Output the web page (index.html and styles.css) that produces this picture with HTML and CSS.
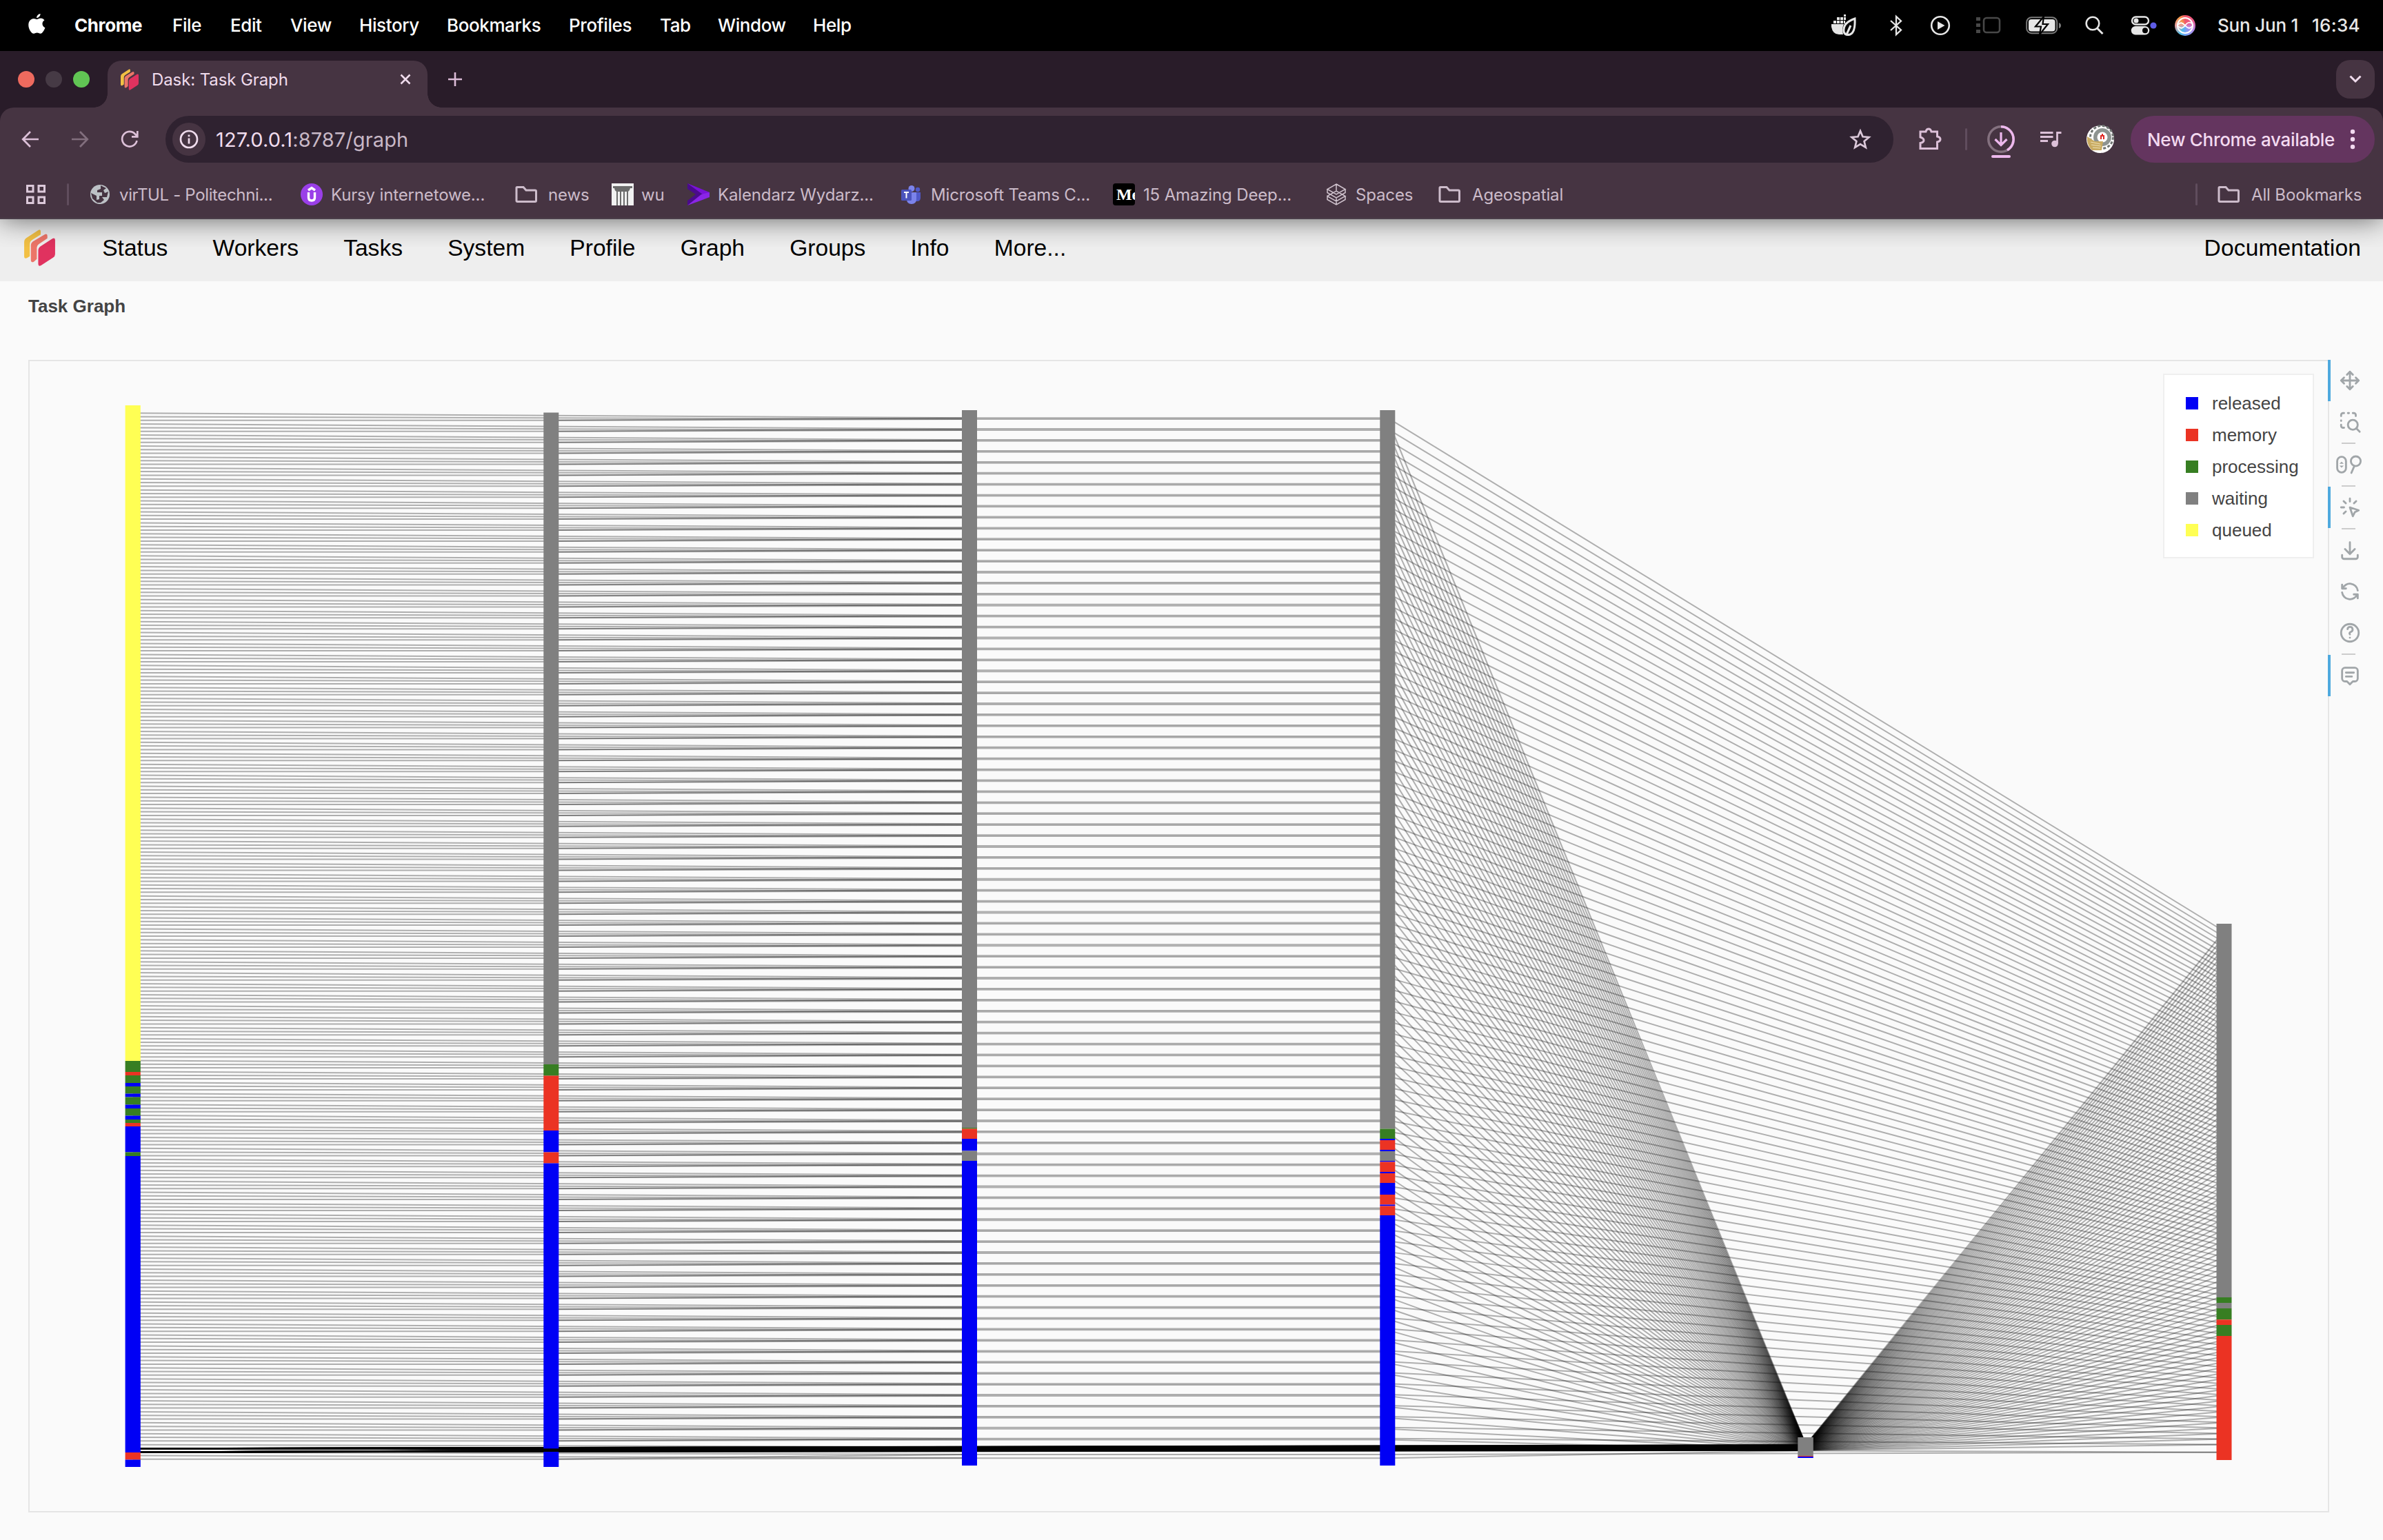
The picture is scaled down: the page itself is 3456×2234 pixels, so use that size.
FILE: index.html
```html
<!DOCTYPE html>
<html lang="en">
<head>
<meta charset="utf-8">
<title>Dask: Task Graph</title>
<link rel="stylesheet" href="styles.css">
</head>
<body>
<svg class="defs" width="0" height="0">
  <symbol id="dask" viewBox="0 0 44 52">
    <path fill="#f2c044" d="M0 18Q0 14 3 12L20 1Q23.500 -1 23.500 3V7L11 15Q8 17 8 21V38L4 40.500Q0 42 0 38Z"/>
    <path fill="#ec7568" d="M9.500 23Q9.500 19 12.500 17L29 7Q33 5 33 9V12.500L21 20.500Q18 22.500 18 26.500V42L14 45.500Q9.500 48 9.500 43Z"/>
    <path fill="#e0325f" d="M20 30Q20 26 23 24L40 13Q44 11 44 15V35Q44 38 41 40L24 51Q20 53 20 49Z"/>
  </symbol>
  <symbol id="folder" viewBox="0 0 32 32">
    <path d="M2 6.500Q2 5.500 3 5.500H12L16 10H29Q30.500 10 30.500 11.500V25Q30.500 26.500 29 26.500H3.500Q2 26.500 2 25Z" fill="none" stroke="#cdbccb" stroke-width="3"/>
  </symbol>
</svg>

<header class="menubar">
  <svg class="apple" viewBox="0 0 26 32"><path fill="#fff" d="M18.200 0c.2 3-2.600 6.300-5.600 6.200C12.300 3.300 15.300.2 18.200 0zM13.200 8.200c1.300 0 3-1.600 5.800-1.500 2.200.1 4.200 1.200 5.300 2.900-4.600 2.900-3.800 9.300 1 11.200-1 3-4 8.800-7 8.900-2 .1-2.700-1.200-5-1.200s-3.200 1.200-5 1.200C4.700 29.600.4 22.700.4 16.700.4 10.600 4.300 7.200 8 7.100c2.200 0 4 1.100 5.200 1.100z"/></svg>
  <nav class="menus">
    <span class="m1 app">Chrome</span><span class="m2">File</span><span class="m3">Edit</span><span class="m4">View</span><span class="m5">History</span><span class="m6">Bookmarks</span><span class="m7">Profiles</span><span class="m8">Tab</span><span class="m9">Window</span><span class="m10">Help</span>
  </nav>
  <div class="status">
    <svg class="s-docker" viewBox="0 0 38 32"><g fill="#e6e6e6"><path d="M0 14H18Q15 20 17 29H11Q2 29 0 18Z"/><path d="M3 9h4v4H3zM8 9h4v4H8zM13 9h4v4h-4zM8 4h4v4H8zM13 4h4v4h-4zM18 4h3v4h-3zM18 0h3v3h-3zM18 9h2v4h-2z"/></g><path d="M34 6C22 10 17 17 18 25Q20 31 27 29Q35 26 34 6ZM22 29L28 16" fill="none" stroke="#e6e6e6" stroke-width="3"/></svg>
    <svg class="s-bt" viewBox="0 0 20 30"><path d="M2 8L17 21.500L10 28V2L17 8.500L2 22" fill="none" stroke="#e6e6e6" stroke-width="2.300"/></svg>
    <svg class="s-play" viewBox="0 0 30 30"><circle cx="15" cy="15" r="12.800" fill="none" stroke="#e6e6e6" stroke-width="2.600"/><path d="M11 9L21.500 15L11 21Z" fill="#e6e6e6"/></svg>
    <svg class="s-stage" viewBox="0 0 36 26"><rect x="11" y="2" width="23" height="21" rx="4" fill="none" stroke="#484848" stroke-width="2.600"/><path d="M0 1h6v5H0zM0 10h6v5H0zM0 19h6v5H0z" fill="#484848"/></svg>
    <svg class="s-bat" viewBox="0 0 52 26"><rect x="1.200" y="1.200" width="44" height="23" rx="7" fill="none" stroke="#7b7b7b" stroke-width="2"/><rect x="4" y="4" width="38.500" height="17.500" rx="4" fill="#e6e6e6"/><path d="M48 9Q51 10 51 13T48 17Z" fill="#7b7b7b"/><path d="M26 0L14 14.500H22L20 26L32 11H24.500Z" fill="#e6e6e6" stroke="#000" stroke-width="2.200"/></svg>
    <svg class="s-find" viewBox="0 0 28 28"><circle cx="11" cy="11" r="9.300" fill="none" stroke="#e6e6e6" stroke-width="2.600"/><path d="M17.500 18L25.500 26" stroke="#e6e6e6" stroke-width="3"/></svg>
    <svg class="s-ctl" viewBox="0 0 38 28"><rect x="2" y="1.500" width="24" height="11" rx="5.500" fill="none" stroke="#e6e6e6" stroke-width="2.400"/><circle cx="8" cy="7" r="3.500" fill="#e6e6e6"/><rect x=".8" y="15" width="26.400" height="12.500" rx="6.200" fill="#e6e6e6"/><circle cx="21" cy="21.200" r="4" fill="#000"/><circle cx="33" cy="14" r="4.600" fill="#5e5ce6"/></svg>
    <span class="siri"><svg viewBox="0 0 30 30"><circle cx="15" cy="15" r="11" fill="none" stroke="#fff" stroke-width="2"/><path d="M5 14Q9 8 15 15T25 16M5 16Q10 22 15 15T25 12" fill="none" stroke="#fff" stroke-width="1.800"/></svg></span>
    <span class="date">Sun Jun 1</span><span class="clock">16:34</span>
  </div>
</header>

<section class="tabstrip">
  <div class="lights"><i class="red"></i><i class="dim"></i><i class="green"></i></div>
  <div class="tab">
    <svg class="favicon"><use href="#dask"/></svg>
    <span class="tab-title">Dask: Task Graph</span>
    <svg class="tab-close" viewBox="0 0 16 16"><path d="M1.500 1.500L14.500 14.500M14.500 1.500L1.500 14.500" stroke="#f0dced" stroke-width="2.600"/></svg>
  </div>
  <svg class="plus" viewBox="0 0 20 20"><path d="M10 0V20M0 10H20" stroke="#dcbcd8" stroke-width="2.600"/></svg>
  <div class="tabsearch"><svg viewBox="0 0 18 12"><path d="M1.500 1.500L9 9L16.500 1.500" fill="none" stroke="#f0dced" stroke-width="3"/></svg></div>
</section>

<section class="chrome">
  <div class="toolbar">
    <svg class="t-back" viewBox="0 0 26 26"><path d="M25 13H3M13 2L2.200 13L13 24" fill="none" stroke="#dcc0d8" stroke-width="2.700"/></svg>
    <svg class="t-fwd" viewBox="0 0 26 26"><path d="M1 13H23M13 2L23.800 13L13 24" fill="none" stroke="#826f7e" stroke-width="2.700"/></svg>
    <svg class="t-load" viewBox="0 0 26 26"><path d="M23.500 15A10.800 10.800 0 1 1 21 5.500L24 8.500M24.300 1V9.300H16" fill="none" stroke="#dcc0d8" stroke-width="2.700"/></svg>
    <div class="omnibox">
      <span class="site"><svg viewBox="0 0 28 28"><circle cx="14" cy="14" r="12" fill="none" stroke="#f0dced" stroke-width="2.700"/><path d="M14 12.500V20.500M14 7.500V10.200" stroke="#f0dced" stroke-width="2.700"/></svg></span>
      <span class="url"><b>127.0.0.1</b>:8787/graph</span>
      <svg class="star" viewBox="0 0 32 32"><path d="M16 4L19.500 12.300L28.500 13L21.600 19L23.800 27.800L16 23L8.200 27.800L10.400 19L3.500 13L12.500 12.300Z" fill="none" stroke="#dcc9da" stroke-width="2.700"/></svg>
    </div>
    <svg class="t-ext" viewBox="0 0 34 34"><path d="M3 7H11Q12 3 15 3T19 7H27.500V14Q32 15 32 18T27.500 22V31.500H3V23.500Q8 22.500 8 19.500T3 15Z" fill="none" stroke="#dcc0d8" stroke-width="3"/></svg>
    <i class="bar"></i>
    <svg class="t-down" viewBox="0 0 40 48"><circle cx="20" cy="20" r="18.200" fill="none" stroke="#84717f" stroke-width="3.500"/><path d="M20 1.800A18.200 18.200 0 0 1 29 35.800" fill="none" stroke="#edb8ed" stroke-width="3.500"/><path d="M20 10V27M11.500 20L20 28.500L28.500 20" fill="none" stroke="#edb8ed" stroke-width="3.200"/><rect x="6" y="43" width="28" height="4" rx="2" fill="#edb8ed"/></svg>
    <svg class="t-list" viewBox="0 0 32 26"><path d="M0 3.500H18.500M0 9.500H18.500M0 15.500H11M30.500 3.500H24.500V19" fill="none" stroke="#dcc0d8" stroke-width="2.800"/><circle cx="21" cy="19.500" r="4.800" fill="#dcc0d8"/></svg>
    <svg class="avatar" viewBox="0 0 40 40"><circle cx="20" cy="20" r="20" fill="#fff"/><circle cx="22" cy="17" r="16.500" fill="none" stroke="#6f7572" stroke-width="3" stroke-dasharray="4 2.500"/><circle cx="23" cy="17" r="13" fill="#8e9491"/><circle cx="23" cy="17" r="7.500" fill="#fff"/><path d="M20 20V14H22V12H24V14H26V20H24V16H22V20Z" fill="#e02a26"/><path d="M1 16L12 23H24L22 36H8Q2 30 1 22Z" fill="#c9ab62"/><path d="M6 24L20 27M7 28L21 30M9 32L20 33" stroke="#eee0b5" stroke-width="1"/></svg>
    <div class="update"><span>New Chrome available</span><svg viewBox="0 0 8 30"><g fill="#f3daf0"><circle cx="4" cy="4" r="3.200"/><circle cx="4" cy="15" r="3.200"/><circle cx="4" cy="26" r="3.200"/></g></svg></div>
  </div>
  <div class="bookmarks">
    <svg class="apps" viewBox="0 0 28 28"><path d="M1.500 1.500h8.500v8.500H1.500zM18 1.500h8.500v8.500H18zM1.500 18h8.500v8.500H1.500zM18 18h8.500v8.500H18z" fill="none" stroke="#dcc9da" stroke-width="3"/></svg>
    <i class="bar"></i>
    <div class="bm b1"><svg viewBox="0 0 32 32"><circle cx="16" cy="16" r="14" fill="#bdc1c6"/><path d="M17 3V8L12 10V13H19V18H15V23L11 24V18L3 14L5 22L12 28L17 28L22 24L19 20H26L28 12L23 14L21 10L25 7Z" fill="#463442"/></svg><span>virTUL - Politechni...</span></div>
    <div class="bm b2"><svg viewBox="0 0 32 32"><circle cx="16" cy="16" r="16" fill="#9a3fe8"/><path d="M11.500 13V20.500Q11.500 25 16 25T20.500 20.500V13M11 10L16 6.500L21 10" fill="none" stroke="#fff" stroke-width="3.400"/></svg><span>Kursy internetowe...</span></div>
    <div class="bm b3 fold"><svg><use href="#folder"/></svg><span>news</span></div>
    <div class="bm b4"><svg viewBox="0 0 32 32"><path fill="#f1f1f1" d="M0 0H32V32H0Z"/><path fill="#6c6c6c" d="M2 4H30V7H27Q26 11 24 12V32H22V12H19V32H17V12H14V32H12V12H9V32H7V12Q4 10 4 7H2Z"/></svg><span>wu</span></div>
    <div class="bm b5"><svg viewBox="0 0 32 32"><path fill="#7a12d8" d="M0 0L32 13V20L18 16Z"/><path fill="#4a0b8c" d="M0 0L22 16L0 32V25L12 16L0 8Z"/><path fill="#8a25e6" d="M32 13V20L0 32L20 16Z"/></svg><span>Kalendarz Wydarz...</span></div>
    <div class="bm b6"><svg viewBox="0 0 32 32"><circle cx="17" cy="7.500" r="4.500" fill="#7b83eb"/><circle cx="26" cy="9" r="3.200" fill="#5059c9"/><path d="M21 13H30V21Q30 26 25 26H21Z" fill="#5059c9"/><path d="M10 13H24V23Q24 30 17 30T10 23Z" fill="#7b83eb"/><rect x="2" y="9" width="15" height="16" rx="1.500" fill="#4b53bc"/><path d="M6 13H13M9.500 13V21.500" stroke="#fff" stroke-width="2"/></svg><span>Microsoft Teams C...</span></div>
    <div class="bm b7"><span class="me">Me</span><span>15 Amazing Deep...</span></div>
    <div class="bm b8"><svg viewBox="0 0 32 32"><path d="M16 1L29 8.500L16 16L3 8.500ZM3 8.500V13.500L16 21L29 13.500V8.500M3 18.500L16 11L29 18.500L16 26L3 18.500V23.500L16 31L29 23.500V18.500M16 1V11M16 21V31" fill="none" stroke="#cfc2cd" stroke-width="1.500"/></svg><span>Spaces</span></div>
    <div class="bm b9 fold"><svg><use href="#folder"/></svg><span>Ageospatial</span></div>
    <i class="bar right"></i>
    <div class="bm b10 fold"><svg><use href="#folder"/></svg><span>All Bookmarks</span></div>
  </div>
</section>

<nav class="dasknav">
  <svg class="logo"><use href="#dask"/></svg>
  <a>Status</a><a>Workers</a><a>Tasks</a><a>System</a><a>Profile</a><a>Graph</a><a>Groups</a><a>Info</a><a>More...</a>
  <a class="docs">Documentation</a>
</nav>

<main class="page">
  <h1>Task Graph</h1>
  <div class="figure">
    <div class="plot">
      <canvas id="graph" width="3334" height="1668"></canvas>
      <ul class="legend">
        <li><i class="released"></i>released</li>
        <li><i class="memory"></i>memory</li>
        <li><i class="processing"></i>processing</li>
        <li><i class="waiting"></i>waiting</li>
        <li><i class="queued"></i>queued</li>
      </ul>
    </div>
    <div class="tools">
      <div class="tool on"><svg viewBox="0 0 24 24"><path d="M3 12H21M12 3V21M18 9L21 12L18 15M6 9L3 12L6 15M9 6L12 3L15 6M9 18L12 21L15 18"/></svg></div>
      <div class="tool"><svg viewBox="0 0 24 24"><circle cx="15" cy="15" r="5"/><path d="M22 22L18.500 18.500M6 18H5A2 2 0 0 1 3 16V15M3 11V10.500M3 6V5A2 2 0 0 1 5 3H6M10 3H11M15 3H16A2 2 0 0 1 18 5V6"/></svg></div>
      <hr>
      <div class="tool"><svg viewBox="0 0 24 24"><rect x="-1" y="4" width="9" height="16" rx="4.500"/><circle cx="18" cy="8.500" r="5"/><path d="M16.500 13.500L13.500 20.500"/><path class="fill" d="M1.300 11.200L3.500 9L5.700 11.200ZM1.300 13L3.500 15.200L5.700 13Z"/></svg></div>
      <hr>
      <div class="tool on"><svg viewBox="0 0 24 24"><path d="M3 12H6M12 3V6M5.600 5.600L7.800 7.800M18.400 5.600L16.200 7.800M7.800 16.200L5.600 18.400M12 12L21 15L17 17L15 21Z"/></svg></div>
      <hr>
      <div class="tool"><svg viewBox="0 0 24 24"><path d="M4 17V19A2 2 0 0 0 6 21H18A2 2 0 0 0 20 19V17M7 11L12 16L17 11M12 4V16"/></svg></div>
      <div class="tool"><svg viewBox="0 0 24 24"><path d="M20 11A8.100 8.100 0 0 0 4.500 9M4 5V9H8M4 13A8.100 8.100 0 0 0 19.500 15M20 19V15H16"/></svg></div>
      <div class="tool"><svg viewBox="0 0 24 24"><circle cx="12" cy="12" r="9"/><path d="M12 17V17.010M12 13.500A1.500 1.500 0 0 1 13 11A2.600 2.600 0 1 0 9.600 8.200"/></svg></div>
      <hr>
      <div class="tool on"><svg viewBox="0 0 24 24"><path d="M8 9H16M8 13H14M9 18H7A3 3 0 0 1 4 15V7A3 3 0 0 1 7 4H17A3 3 0 0 1 20 7V15A3 3 0 0 1 17 18H15L12 21Z"/></svg></div>
    </div>
  </div>
</main>
<script src="graph.js"></script>
</body>
</html>
```

FILE: styles.css
```css
* { box-sizing: border-box; }
body { margin: 0; background: #fafafa; font-family: Inter, "Noto Sans", sans-serif; width: 3456px; height: 2234px; overflow: hidden; }
.defs { display: block; height: 0; }
svg { display: block; flex: none; overflow: visible; }
i { display: block; flex: none; }
span { white-space: nowrap; }

/* system menu bar */
.menubar { height: 74px; background: #000; color: #fff; display: flex; align-items: center; padding: 0 33px 1px 40px; font-size: 26px; letter-spacing: -.4px; }
.apple { width: 27px; height: 31px; margin: -3px 41px 0 0; }
.menus { display: flex; font-weight: 500; }
.app { font-weight: 700; }
.m1 { width: 142px; } .m2 { width: 84px; } .m3 { width: 87px; } .m4 { width: 100px; } .m5 { width: 127px; }
.m6 { width: 177px; } .m7 { width: 132px; } .m8 { width: 84px; } .m9 { width: 138px; }
.status { margin-left: auto; display: flex; align-items: center; color: #e8e8e8; font-weight: 500; }
.s-docker { width: 38px; height: 32px; margin-right: 46px; }
.s-bt { width: 20px; height: 30px; margin-right: 39px; }
.s-play { width: 30px; height: 30px; margin-right: 37px; }
.s-stage { width: 36px; height: 26px; margin-right: 36px; }
.s-bat { width: 52px; height: 26px; margin-right: 34px; }
.s-find { width: 28px; height: 28px; margin-right: 38px; }
.s-ctl { width: 38px; height: 28px; margin-right: 26px; }
.siri { width: 30px; height: 30px; border-radius: 50%; margin-right: 32px; background: conic-gradient(#f0566a, #f05a86 15%, #b98bea 32%, #6fa6f7 50%, #4fc0e8 58%, #e9a0a0 75%, #f59a4a 90%, #f0566a); }
.date { width: 137px; letter-spacing: -.2px; }
.clock { width: 70px; letter-spacing: .3px; }

/* tab strip */
.tabstrip { height: 82px; background: #291c29; display: flex; align-items: center; padding: 0 12px 0 26px; }
.lights { display: flex; gap: 16px; width: 130px; }
.lights i { width: 24px; height: 24px; border-radius: 50%; }
.lights .red { background: #ed6a5e; }
.lights .dim { background: #463a45; }
.lights .green { background: #61c554; }
.tab { position: relative; align-self: flex-end; width: 464px; height: 68px; background: #463442; border-radius: 20px 20px 0 0; display: flex; align-items: center; padding: 0 24px 14px 19px; }
.tab::before, .tab::after { content: ""; position: absolute; bottom: 0; width: 20px; height: 20px; }
.tab::before { left: -20px; background: radial-gradient(circle at 0 0, transparent 19.500px, #463442 20px); }
.tab::after { right: -20px; background: radial-gradient(circle at 100% 0, transparent 19.500px, #463442 20px); }
.favicon { width: 26px; height: 31px; margin-right: 19px; }
.tab-title { color: #f0dced; font-size: 24px; letter-spacing: -.1px; }
.tab-close { width: 16px; height: 16px; margin-left: auto; }
.plus { width: 20px; height: 20px; margin-left: 30px; }
.tabsearch { margin-left: auto; width: 56px; height: 56px; border-radius: 20px; background: #463442; display: flex; align-items: center; justify-content: center; }
.tabsearch svg { width: 18px; height: 12px; }

/* toolbar */
.chrome { height: 162px; background: #463442; border-bottom: 2px solid #4b3e4a; border-radius: 20px 20px 0 0; box-shadow: 0 -20px 0 #291c29, 0 0 40px rgba(0,0,0,.6); position: relative; clip-path: inset(0 0 -40px 0); }
.toolbar { display: flex; align-items: center; height: 92px; padding: 12px 12px 12px 31px; }
.t-back, .t-fwd, .t-load { width: 26px; height: 26px; }
.t-fwd { margin-left: 46px; }
.t-load { margin-left: 46px; }
.omnibox { margin-left: 39px; width: 2506px; height: 68px; border-radius: 34px; background: #2f2230; display: flex; align-items: center; padding: 0 32px 0 10px; }
.site { width: 48px; height: 48px; border-radius: 50%; background: #463442; display: flex; align-items: center; justify-content: center; margin-right: 15px; }
.site svg { width: 28px; height: 28px; }
.url { font-size: 29px; color: #c8b8c6; letter-spacing: .1px; }
.url b { font-weight: 400; color: #f0dced; }
.star { width: 32px; height: 32px; margin-left: auto; }
.t-ext { width: 34px; height: 34px; margin-left: 36px; margin-top: -2px; }
.bar { width: 3px; height: 32px; border-radius: 2px; background: #604d5d; }
.toolbar .bar { margin-left: 34px; }
.t-down { width: 40px; height: 48px; margin: 8px 0 0 29px; }
.t-list { width: 32px; height: 26px; margin-left: 37px; }
.avatar { width: 40px; height: 40px; margin-left: 35px; }
.update { margin-left: auto; width: 354px; height: 68px; border-radius: 34px; background: #64355f; color: #f3daf0; font-size: 26px; font-weight: 500; letter-spacing: -.3px; display: flex; align-items: center; justify-content: space-between; padding: 0 28px 0 24px; }
.update svg { width: 8px; height: 30px; }

/* bookmarks */
.bookmarks { display: flex; align-items: center; height: 68px; padding: 0 30px 0 38px; color: #cbbbc9; font-size: 24px; letter-spacing: -.15px; }
.apps { width: 28px; height: 28px; }
.bookmarks > .bar { margin: 0 29px 0 31px; }
.bookmarks > .right { margin: 0 29px 0 auto; }
.bm { display: flex; align-items: center; gap: 12px; }
.bm svg { width: 32px; height: 32px; }
.fold { gap: 17px; }
.b1 { width: 307px; } .b2 { width: 311px; } .b3 { width: 140px; } .b4 { width: 110px; } .b5 { width: 308px; }
.b6 { width: 309px; } .b7 { width: 308px; } .b8 { width: 164px; } .b10 { width: 210px; }
.b3 { gap: 16px; } .b4 { gap: 11px; } .b6 { gap: 13px; }
.b1 { letter-spacing: -.35px; }
.me { width: 32px; height: 32px; background: #000; color: #fff; border-radius: 4px; overflow: hidden; font: 700 24px/32px "Liberation Serif", serif; padding-left: 5px; }

/* dask navigation */
.dasknav { height: 90px; background: #eee; display: flex; align-items: center; padding: 0 32px 6px 35px; font: 33.600px "Liberation Sans", Arial, sans-serif; color: #000; gap: 65.200px; }
.logo { width: 45px; height: 53px; margin: -2px 3px 0 0; }
.docs { margin-left: auto; letter-spacing: .12px; }

/* page */
.page { padding: 18px 0 0 41px; font-family: "Liberation Sans", Arial, sans-serif; color: #444; }
h1 { margin: 0; font-size: 26px; line-height: 36px; height: 53px; }
.figure { display: flex; margin-top: 43px; }
.plot { position: relative; width: 3337px; height: 1672px; border: 2px solid #e5e5e5; }
.plot canvas { display: block; }
.legend { position: absolute; top: 18px; right: 20px; width: 219px; height: 268px; margin: 0; padding: 18px 0 0 31px; list-style: none; background: #fff; border: 2px solid #efefef; font-size: 26px; }
.legend li { display: flex; align-items: center; height: 46px; }
.legend i { width: 18px; height: 18px; margin-right: 20px; }
.released { background: #0000f5; }
.memory { background: #eb3323; }
.processing { background: #377e22; }
.waiting { background: #808080; }
.queued { background: #ffff54; }
.tools { width: 62px; margin-left: -2px; position: relative; }
.tool { height: 60px; display: flex; align-items: center; padding-left: 11px; border-left: 4px solid transparent; }
.tool.on { border-color: #4fa9de; }
.tool svg { width: 34px; height: 34px; fill: none; stroke: #a1a6a9; stroke-width: 2; stroke-linecap: round; stroke-linejoin: round; }
.tool .fill { fill: #a1a6a9; stroke: none; }
.tools hr { margin: 0 0 0 20px; width: 20px; height: 2px; border: 0; background: #ccc; }
```

FILE: graph.js
```javascript
const canvas = document.getElementById('graph');
const ctx = canvas.getContext('2d');
// Data coordinates are window pixels; shift them into the plot frame.
ctx.translate(-43, -524);

const X = [192.7, 799.3, 1405.8, 2012.4, 2619, 3225.5];
const STEP = 15.92, CHUNKS = 94;

ctx.strokeStyle = 'rgba(0,0,0,0.3)';
ctx.lineWidth = 2;
function edge(a, y1, b, y2) {
  ctx.beginPath();
  ctx.moveTo(X[a], y1);
  ctx.lineTo(X[b], y2);
  ctx.stroke();
}

for (let i = 0; i < CHUNKS; i++) {
  const d = i * STEP;
  const mid = 2096 + i * 8 / 93;
  const end = 1351 + i * 8.006;
  edge(0, 599.2 + d, 2, 606.3 + d);
  edge(0, 604.5 + d, 2, 608 + d);
  edge(0, 609.8 + d, 1, 609.8 + d);
  edge(1, 609.8 + d, 2, 606.3 + d);
  edge(1, 609.8 + d, 2, 608 + d);
  edge(2, 606.2 + d, 3, 606.2 + d);
  edge(2, 608 + d, 3, 608 + d);
  edge(3, 606.2 + d, 5, end);
  edge(3, 608 + d, 4, mid);
  edge(4, mid, 5, end);
  // shared inputs feeding every chunk
  edge(0, 2101.2, 4, mid);
  edge(0, 2106.4, 4, mid);
}
edge(0, 2095.8, 2, 2099);
edge(0, 2106.4, 2, 2110);
edge(0, 2111.6, 2, 2115);
edge(0, 2116.8, 1, 2116.8);
edge(1, 2116.8, 2, 2110);
edge(1, 2116.8, 2, 2115.3);
edge(2, 2110, 3, 2110);
edge(2, 2115.2, 3, 2115.2);
edge(3, 2110, 5, 2106.7);
edge(3, 2115.2, 4, 2104.5);
edge(4, 2104.5, 5, 2106.7);

const C = { y: '#ffff54', g: '#377e22', r: '#eb3323', b: '#0000f5', w: '#808080' };
// [left, width, top, [colour, bottom]...]; an empty colour leaves a gap
const bars = [
  [181.6, 22.2, 588, ['y',1539],['g',1555],['r',1560],['g',1571],['b',1576],['g',1586.5],['b',1591.5],['g',1602.5],['b',1608],['g',1618.5],['b',1624],['g',1629],['r',1634],['b',1671.5],['g',1677],['b',2107],['r',2117.5],['b',2128]],
  [788.3, 22, 598.5, ['w',1544],['g',1560.5],['r',1640],['b',1671.5],['r',1687.5],['b',2101.3],['',2106],['b',2128]],
  [1395, 22, 595, ['w',1636],['g',1637.5],['r',1652],['b',1669.5],['w',1684],['b',2126]],
  [2001.3, 22, 595, ['w',1637.5],['g',1652],['b',1654],['r',1668],['b',1670],['w',1684],['b',1685.5],['r',1700],['b',1702],['r',1716],['b',1733],['r',1747.5],['b',1749.5],['r',1763],['b',2126]],
  [2607.3, 22.5, 2085, ['w',2112],['r',2113],['b',2115]],
  [3214.5, 22, 1340, ['w',1882],['g',1890],['w',1898],['g',1914.3],['r',1922],['g',1938],['r',2118]]
];
for (const [x, w, top, ...parts] of bars) {
  let y = top;
  for (const [c, bottom] of parts) {
    if (c) { ctx.fillStyle = C[c]; ctx.fillRect(x, y, w, bottom - y); }
    y = bottom;
  }
}
```
